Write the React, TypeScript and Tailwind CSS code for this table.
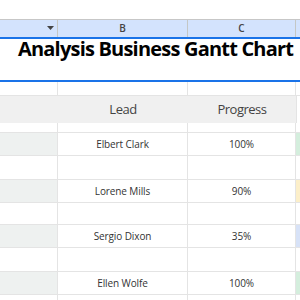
import React from "react";

const font = { fontFamily: '"Open Sans", "Noto Sans", sans-serif' };

function Row({
  h,
  a,
  b,
  c,
  d,
  aBg = "bg-white",
  dBg = "bg-white",
}: {
  h: string;
  a?: React.ReactNode;
  b?: React.ReactNode;
  c?: React.ReactNode;
  d?: React.ReactNode;
  aBg?: string;
  dBg?: string;
}) {
  return (
    <div className={`flex ${h} border-b border-[#e4e4e4]`}>
      <div className={`w-[58px] shrink-0 border-r border-[#e4e4e4] ${aBg}`}>{a}</div>
      <div className="w-[130px] shrink-0 border-r border-[#e4e4e4] flex items-center justify-center text-[10px] tracking-[-0.1px] text-[#333]">
        {b}
      </div>
      <div className="w-[108px] shrink-0 border-r border-[#e4e4e4] flex items-center justify-center text-[10px] tracking-[-0.1px] text-[#333]">
        {c}
      </div>
      <div className={`flex-1 ${dBg}`}>{d}</div>
    </div>
  );
}

export default function App() {
  const data = [
    { name: "Elbert Clark", p: "100%", color: "bg-[#d4eedd]" },
    { name: "Lorene Mills", p: "90%", color: "bg-[#fcefc9]" },
    { name: "Sergio Dixon", p: "35%", color: "bg-[#d7e2f7]" },
    { name: "Ellen Wolfe", p: "100%", color: "bg-[#d4eedd]" },
  ];
  const spacerH = ["h-[24px]", "h-[22px]", "h-[24px]", "h-[24px]"];
  return (
    <div className="w-[300px] h-[300px] overflow-hidden bg-white" style={font}>
      <div className="h-[20px] bg-white border-b border-[#c7c7c7]" />
      <div className="flex h-[17px] bg-[#d3e3fd] text-[10px] font-semibold text-[#444]">
        <div className="w-[58px] shrink-0 border-r border-[#c4c7c5] relative">
          <svg className="absolute left-[47px] top-[6px]" width="7" height="4" viewBox="0 0 7 4">
            <path d="M0 0 L7 0 L3.5 4 Z" fill="#444" />
          </svg>
        </div>
        <div className="w-[130px] shrink-0 border-r border-[#c4c7c5] flex items-center justify-center">B</div>
        <div className="w-[108px] shrink-0 border-r border-[#c4c7c5] flex items-center justify-center">C</div>
        <div className="flex-1" />
      </div>
      <div className="h-[2px] bg-[#1a73e8]" />
      <div className="h-[41px] bg-white relative">
        <div className="absolute left-[18px] top-0 whitespace-nowrap text-[20px] tracking-[-0.8px] font-bold text-black leading-[20px]">
          Analysis Business Gantt Chart
        </div>
      </div>
      <div className="h-[2px] bg-[#1a73e8]" />
      <Row h="h-[14px]" />
      <div className="flex h-[27px] bg-[#f0f0f0] text-[13px] tracking-[-0.5px] text-[#434343]">
        <div className="w-[58px] shrink-0" />
        <div className="w-[130px] shrink-0 flex items-center justify-center">Lead</div>
        <div className="w-[108px] shrink-0 flex items-center justify-center">Progress</div>
        <div className="flex-1 border-l border-[#e4e4e4] bg-white" />
      </div>
      <Row h="h-[10px]" />
      {data.map((r, i) => (
        <React.Fragment key={r.name}>
          <Row h="h-[23px]" aBg="bg-[#eef1f0]" b={r.name} c={r.p} dBg={r.color} />
          <Row h={spacerH[i]} />
        </React.Fragment>
      ))}
    </div>
  );
}
